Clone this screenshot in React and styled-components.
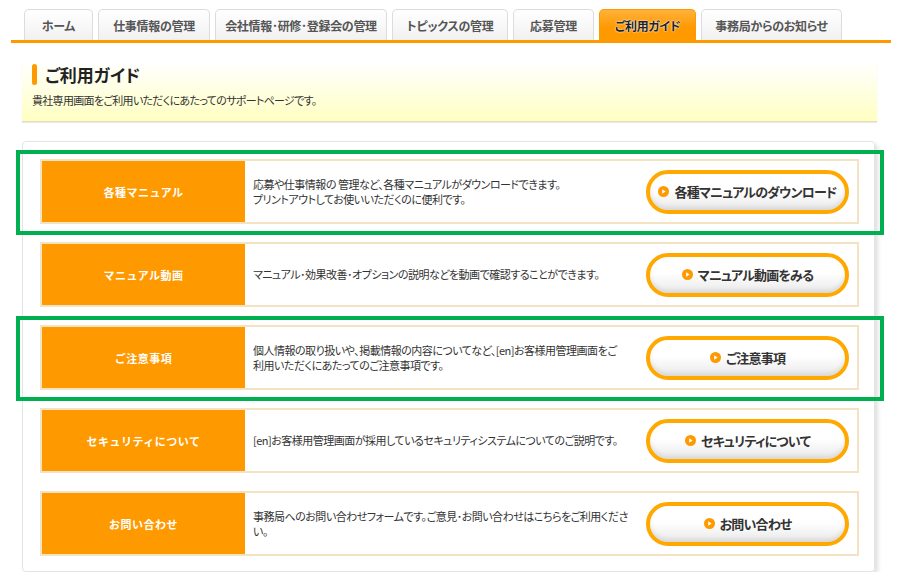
import React from 'react';
import styled, { createGlobalStyle } from 'styled-components';

const GlobalStyle = createGlobalStyle`
	body {
		margin: 0;
		background: #ffffff;
		font-family: "Noto Sans CJK JP", "Noto Sans", sans-serif;
		color: #333;
	}
`;

const Page = styled.div`
	width: 906px;
	padding-top: 9px;
`;

const TabBar = styled.nav`
	display: flex;
	gap: 5px;
	width: 880px;
	margin-left: 11px;
	padding-left: 13px;
	box-sizing: border-box;
	border-bottom: 3px solid #ff9900;
`;

const Tab = styled.div`
	width: ${(p) => p.$w}px;
	height: 31px;
	box-sizing: border-box;
	display: flex;
	align-items: center;
	justify-content: center;
	border: 1px solid ${(p) => (p.$active ? '#ff9900' : '#dcdcdc')};
	border-bottom: none;
	border-radius: 5px 5px 0 0;
	background: ${(p) =>
		p.$active
			? 'linear-gradient(#ffb13b, #ff9900 60%)'
			: 'linear-gradient(#ffffff, #f1f1f1)'};
	font-size: 12px;
	font-weight: bold;
	font-feature-settings: "palt";
	letter-spacing: -0.3px;
	color: ${(p) => (p.$active ? '#222' : '#555')};
	text-shadow: ${(p) => (p.$active ? '0 0 2px #fff, 0 0 1px #fff' : 'none')};
`;

const Header = styled.header`
	width: 855px;
	height: 60px;
	margin: 19px 0 0 22px;
	padding: 1px 0 0 10px;
	box-sizing: border-box;
	background: linear-gradient(#ffffff, #ffffc2);
	border-bottom: 1px solid #dedec0;
	box-shadow: 0 1px 1px rgba(0, 0, 0, 0.08);
`;

const TitleRow = styled.div`
	display: flex;
	align-items: center;
	gap: 8px;
	height: 22px;
`;

const TitleBar = styled.span`
	width: 5px;
	height: 21px;
	border-radius: 3px;
	background: #ff9900;
`;

const Title = styled.h1`
	margin: 0;
	font-size: 17px;
	font-weight: bold;
	font-feature-settings: "palt";
	color: #222;
`;

const Subtitle = styled.p`
	margin: 7px 0 0;
	font-size: 11px;
	font-feature-settings: "palt";
	letter-spacing: -0.7px;
	color: #333;
`;

const Panel = styled.section`
	width: 853px;
	margin: 19px 0 0 22px;
	padding: 17px 15px 15px 17px;
	box-sizing: border-box;
	border: 1px solid #e4e4e4;
	border-radius: 4px;
	box-shadow: 3px 3px 4px rgba(0, 0, 0, 0.12);
	display: flex;
	flex-direction: column;
	gap: 18px;
`;

const Row = styled.div`
	position: relative;
	display: flex;
	align-items: center;
	height: 65px;
	box-sizing: border-box;
	border: 2px solid #f4e3c3;

	${(p) =>
		p.$marked &&
		`
		&::after {
			content: '';
			position: absolute;
			left: -26px;
			right: -27px;
			top: -11px;
			bottom: -13px;
			border: 4px solid #00b050;
			pointer-events: none;
		}
	`}
`;

const Label = styled.div`
	align-self: stretch;
	width: 203px;
	display: flex;
	align-items: center;
	justify-content: center;
	background: #ff9900;
	color: #fff;
	font-size: 11px;
	font-weight: bold;
	letter-spacing: 0.5px;
`;

const Desc = styled.p`
	flex: 1;
	margin: 0;
	padding-left: 8px;
	font-size: 11px;
	line-height: 15px;
	font-feature-settings: "palt";
	letter-spacing: -0.5px;
	color: #333;
	white-space: nowrap;
`;

const Button = styled.a`
	width: 203px;
	height: 44px;
	margin-right: 8px;
	box-sizing: border-box;
	display: flex;
	align-items: center;
	justify-content: center;
	gap: 5px;
	border: 4px solid #ffa800;
	border-radius: 22px;
	background: linear-gradient(#ffffff 0%, #ffffff 45%, #e9e9e9 100%);
	box-shadow: inset 0 -3px 4px rgba(0, 0, 0, 0.08);
	font-size: 13px;
	font-weight: bold;
	font-feature-settings: "palt";
	letter-spacing: -0.8px;
	color: #333;
	text-decoration: none;
	cursor: pointer;
`;

function PlayIcon() {
	return (
		<svg width="11" height="11" viewBox="0 0 11 11">
			<circle cx="5.5" cy="5.5" r="5.5" fill="#ff9900" />
			<path d="M4.2 3.2 L7.6 5.5 L4.2 7.8 Z" fill="#fff" />
		</svg>
	);
}

const tabs = [
	{ name: 'ホーム', w: 69 },
	{ name: '仕事情報の管理', w: 112 },
	{ name: '会社情報･研修･登録会の管理', w: 172 },
	{ name: 'トピックスの管理', w: 116 },
	{ name: '応募管理', w: 81 },
	{ name: 'ご利用ガイド', w: 97, active: true },
	{ name: '事務局からのお知らせ', w: 141 },
];

const rows = [
	{
		label: '各種マニュアル',
		lines: ['応募や仕事情報の 管理など、各種マニュアルがダウンロードできます。', 'プリントアウトしてお使いいただくのに便利です。'],
		button: '各種マニュアルのダウンロード',
		marked: true,
	},
	{
		label: 'マニュアル動画',
		lines: ['マニュアル･効果改善･オプションの説明などを動画で確認することができます。'],
		button: 'マニュアル動画をみる',
	},
	{
		label: 'ご注意事項',
		lines: ['個人情報の取り扱いや、掲載情報の内容についてなど、[en]お客様用管理画面をご', '利用いただくにあたってのご注意事項です。'],
		button: 'ご注意事項',
		marked: true,
	},
	{
		label: 'セキュリティについて',
		lines: ['[en]お客様用管理画面が採用しているセキュリティシステムについてのご説明です。'],
		button: 'セキュリティについて',
	},
	{
		label: 'お問い合わせ',
		lines: ['事務局へのお問い合わせフォームです。ご意見･お問い合わせはこちらをご利用くださ', 'い。'],
		button: 'お問い合わせ',
	},
];

export default function App() {
	return (
		<Page>
			<GlobalStyle />
			<TabBar>
				{tabs.map((t) => (
					<Tab key={t.name} $w={t.w} $active={t.active}>
						{t.name}
					</Tab>
				))}
			</TabBar>
			<Header>
				<TitleRow>
					<TitleBar />
					<Title>ご利用ガイド</Title>
				</TitleRow>
				<Subtitle>貴社専用画面をご利用いただくにあたってのサポートページです。</Subtitle>
			</Header>
			<Panel>
				{rows.map((r) => (
					<Row key={r.label} $marked={r.marked}>
						<Label>{r.label}</Label>
						<Desc>
							{r.lines.map((l, i) => (
								<React.Fragment key={i}>
									{i > 0 && <br />}
									{l}
								</React.Fragment>
							))}
						</Desc>
						<Button>
							<PlayIcon />
							{r.button}
						</Button>
					</Row>
				))}
			</Panel>
		</Page>
	);
}
